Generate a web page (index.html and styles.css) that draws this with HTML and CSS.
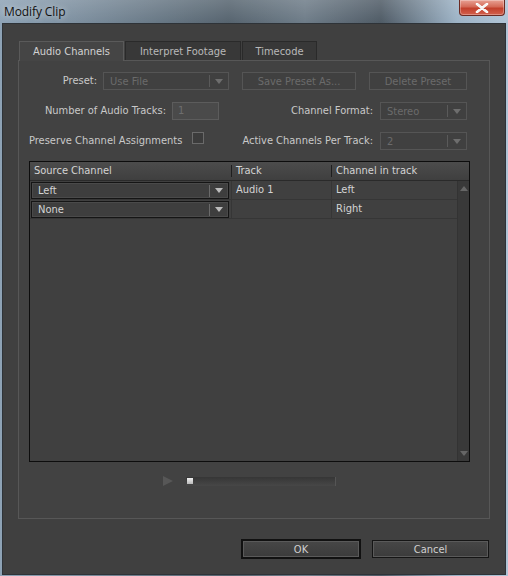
FILE: index.html
```html
<!DOCTYPE html>
<html>
<head>
<meta charset="utf-8">
<link rel="stylesheet" href="styles.css">
</head>
<body>
<div class="window">
  <div class="titlebar">
    <span class="title">Modify Clip</span>
    <div class="close"><svg width="14" height="10" viewBox="0 0 14 10"><path d="M2 1 L12 9 M12 1 L2 9" stroke="#fff" stroke-width="2.6" stroke-linecap="round"/><path d="M2 1 L12 9 M12 1 L2 9" stroke="#f4f4f4" stroke-width="1.6"/></svg></div>
  </div>
  <div class="client">
    <div class="tabs">
      <div class="tab active">Audio Channels</div>
      <div class="tab t2">Interpret Footage</div>
      <div class="tab t3">Timecode</div>
    </div>
    <div class="panel">
      <div class="row r1">
        <div class="lbl w-preset">Preset:</div>
        <div class="sel dis s-preset"><span>Use File</span><i class="sep"></i><i class="arr"></i></div>
        <div class="btn dis b-save">Save Preset As...</div>
        <div class="btn dis b-del">Delete Preset</div>
      </div>
      <div class="row r2">
        <div class="lbl w-num">Number of Audio Tracks:</div>
        <div class="inp dis">1</div>
        <div class="lbl w-fmt">Channel Format:</div>
        <div class="sel dis s-small"><span>Stereo</span><i class="sep"></i><i class="arr"></i></div>
      </div>
      <div class="row r3">
        <div class="lbl w-pres">Preserve Channel Assignments</div>
        <div class="check"></div>
        <div class="lbl w-act">Active Channels Per Track:</div>
        <div class="sel dis s-small"><span>2</span><i class="sep"></i><i class="arr"></i></div>
      </div>
      <div class="table">
        <div class="thead">
          <div class="th c1">Source Channel</div>
          <div class="th c2">Track</div>
          <div class="th c3">Channel in track</div>
        </div>
        <div class="tbody">
          <div class="rows">
            <div class="tr">
              <div class="td c1"><div class="sel rowsel"><span>Left</span><i class="sep"></i><i class="arr"></i></div></div>
              <div class="td c2">Audio 1</div>
              <div class="td c3">Left</div>
            </div>
            <div class="tr">
              <div class="td c1"><div class="sel rowsel"><span>None</span><i class="sep"></i><i class="arr"></i></div></div>
              <div class="td c2"></div>
              <div class="td c3">Right</div>
            </div>
            <div class="filler"></div>
          </div>
          <div class="scroll">
            <i class="up"></i>
            <i class="down"></i>
          </div>
        </div>
      </div>
      <div class="player">
        <i class="play"></i>
        <div class="slider"><i class="thumb"></i></div>
      </div>
    </div>
    <div class="footer">
      <div class="btn ok">OK</div>
      <div class="btn cancel">Cancel</div>
    </div>
  </div>
</div>
</body>
</html>
```
FILE: styles.css
```css
* { box-sizing: border-box; }
html, body { margin: 0; padding: 0; }
body {
  width: 508px; height: 576px; overflow: hidden;
  font-family: "DejaVu Sans Condensed", "Liberation Sans", sans-serif;
  font-size: 11px;
}
.window {
  width: 508px; height: 576px;
  background: linear-gradient(90deg, #8ea3b6 0%, #7d8f9f 15%, #56646f 45%, #6e7c88 60%, #4f5b66 75%, #9db3c6 90%, #b0c4d6 100%);
  display: flex; flex-direction: column;
}
.titlebar {
  height: 23px; display: flex; justify-content: space-between; align-items: flex-start;
  background: linear-gradient(180deg, rgba(255,255,255,0.15), rgba(255,255,255,0));
}
.title {
  font-family: "Open Sans", "DejaVu Sans", sans-serif;
  font-size: 12px; color: #111; margin: 3px 0 0 4px; letter-spacing: -0.1px;
  text-shadow: 0 0 6px rgba(255,255,255,0.7);
}
.close {
  width: 46px; height: 16px; margin-right: 3px;
  background: linear-gradient(180deg, #e8a194 0%, #d46a57 45%, #c2402c 55%, #d2604c 100%);
  border: 1px solid #6b2a22; border-top: none;
  border-radius: 0 0 4px 4px;
  display: flex; align-items: center; justify-content: center;
  box-shadow: inset 0 0 0 1px rgba(255,255,255,0.3);
}
.client {
  margin: 0 2px 1px 2px; flex: 1;
  background: #404040;
  border: 1px solid #2e3338;
  padding: 17px 0 0 15px;
  display: flex; flex-direction: column;
  color: #c9c9c9;
}
.tabs { display: flex; height: 19px; padding-left: 1px; }
.tab {
  height: 19px; padding-top: 3px; text-align: center; flex-shrink: 0;
  border: 1px solid #2a2a2a; border-bottom: none;
  background: #383838; color: #b9b9b9;
  margin-right: 1px;
}
.tab.active {
  width: 105px; background: #454545; border-color: #5a5a5a; color: #d2d2d2;
  height: 20px; position: relative; z-index: 1; margin-bottom: -1px;
}
.tab.t2 { width: 116px; }
.tab.t3 { width: 75px; }
.panel {
  width: 472px; height: 459px;
  border: 1px solid #575757;
  background: #424242;
  padding: 11px 0 0 0;
  display: flex; flex-direction: column;
}
.row { display: flex; align-items: flex-start; height: 18px; }
.row > * { flex-shrink: 0; }
.r2, .r3 { margin-top: 12px; }
.lbl { color: #c9c9c9; line-height: 18px; white-space: nowrap; display: flex; justify-content: flex-end; }
.w-preset { width: 78px; margin-right: 6px; }
.w-num { width: 147px; margin-right: 6px; }
.w-fmt { width: 154px; margin-right: 7px; }
.w-pres { padding-left: 10px; width: 173px; justify-content: flex-start; }
.w-act { width: 132px; margin-right: 7px; }
.sel {
  height: 18px; display: flex; align-items: center; position: relative;
  border: 1px solid #2b2b2b; background: #3c3c3c; color: #6b6b6b;
  padding-left: 6px; flex-shrink: 0;
}
.sel span { flex: 1; }
.sel .sep { width: 1px; height: 12px; background: #5a5a5a; margin-right: 5px; }
.sel .arr {
  width: 0; height: 0; border-left: 4px solid transparent; border-right: 4px solid transparent;
  border-top: 5px solid #6e6e6e; margin-right: 5px;
}
.sel.dis { border-color: #555; background: #404040; }
.s-preset { width: 126px; }
.s-small { width: 87px; }
.btn {
  height: 18px; display: flex; align-items: center; justify-content: center;
  border: 1px solid #555; color: #6b6b6b; background: #404040; flex-shrink: 0;
}
.b-save { width: 114px; margin-left: 13px; }
.b-del { width: 98px; margin-left: 13px; }
.inp {
  width: 47px; height: 18px; border: 1px solid #5c5c5c; background: #4a4a4a;
  color: #6e6e6e; padding-left: 5px; line-height: 16px;
}
.check {
  width: 12px; height: 12px; border: 1px solid #6a6a6a; background: #3c3c3c;
  margin-right: 37px;
}
.table {
  margin: 11px 0 0 10px; width: 441px; height: 301px;
  border: 1px solid #0d0d0d; display: flex; flex-direction: column;
  background: #404040;
}
.thead {
  height: 19px; display: flex; flex-shrink: 0;
  background: linear-gradient(180deg, #4c4c4c, #3f3f3f);
  border-bottom: 1px solid #2a2a2a;
}
.th { color: #d4d4d4; line-height: 18px; padding-left: 4px; flex-shrink: 0; }
.th.c2, .th.c3 {
  background-image: linear-gradient(#1e1e1e, #1e1e1e); background-size: 1px 12px;
  background-repeat: no-repeat; background-position: 0 3px; padding-left: 5px;
}
.c1 { width: 201px; flex-shrink: 0; }
.c2 { width: 100px; flex-shrink: 0; }
.c3 { width: 126px; flex-shrink: 0; }
.th.c3 { width: 138px; }
.tbody { flex: 1; display: flex; }
.rows { flex: 1; display: flex; flex-direction: column; }
.tr { display: flex; height: 19px; border-bottom: 1px solid #363636; }
.td { color: #d4d4d4; line-height: 18px; padding-left: 4px; }
.td.c1 { padding: 1px 1px 0 1px; }
.td.c2, .td.c3 { border-left: 1px solid #363636; }
.rowsel {
  width: 198px; height: 17px; border: 1px solid #151515; background: #3e3e3e; color: #d4d4d4;
  box-shadow: inset 0 0 0 1px #4a4a4a; padding-left: 6px;
}
.rowsel .sep { background: #6a6a6a; }
.rowsel .arr { border-top-color: #bcbcbc; }
.filler { flex: 1; }
.scroll {
  width: 12px; background: #393939; border-left: 1px solid #333;
  display: flex; flex-direction: column; justify-content: space-between; align-items: center;
  padding: 5px 0 5px 0;
}
.scroll .up { width: 0; height: 0; border-left: 4px solid transparent; border-right: 4px solid transparent; border-bottom: 5px solid #666; }
.scroll .down { width: 0; height: 0; border-left: 4px solid transparent; border-right: 4px solid transparent; border-top: 5px solid #666; }
.player { display: flex; align-items: center; margin: 14px 0 0 144px; height: 10px; }
.play {
  width: 0; height: 0; border-top: 5px solid transparent; border-bottom: 5px solid transparent;
  border-left: 10px solid #575757; margin-right: 13px;
}
.slider {
  width: 150px; height: 9px; background: linear-gradient(180deg, #363636, #474747);
  border-right: 1px solid #555; display: flex; align-items: center;
}
.thumb { width: 6px; height: 6px; background: linear-gradient(180deg, #f0f0f0, #b8b8b8); margin-left: 1px; }
.footer { display: flex; margin: 20px 0 0 223px; align-items: center; }
.btn.ok {
  width: 120px; height: 20px; border: 2px solid #111; background: linear-gradient(180deg,#474747,#3b3b3b);
  color: #d0d0d0; box-shadow: inset 0 0 0 1px #5a5a5a;
}
.btn.cancel {
  width: 117px; height: 18px; margin-left: 11px; border: 1px solid #151515;
  background: linear-gradient(180deg,#474747,#3b3b3b); color: #d0d0d0; box-shadow: inset 0 0 0 1px #5a5a5a;
}
```
